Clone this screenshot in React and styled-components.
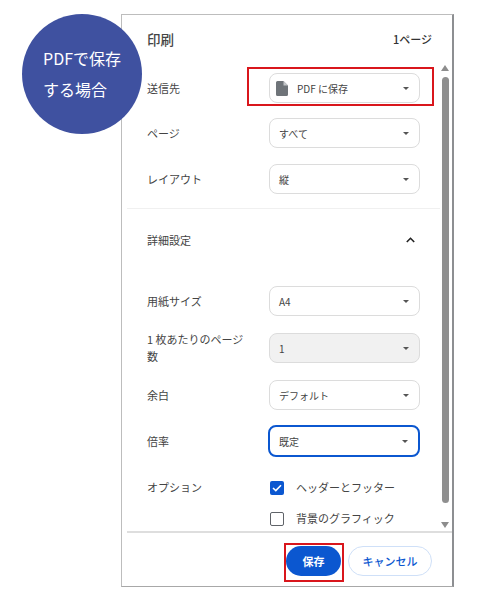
import React from "react";
import styled, { createGlobalStyle } from "styled-components";

const Global = createGlobalStyle`
  html, body { margin: 0; padding: 0; background: #fff; }
  body { font-family: "Noto Sans CJK JP", "Liberation Sans", sans-serif; }
`;
const Page = styled.div`
  position: relative;
  width: 480px;
  height: 600px;
  padding: 14px 26px 0 121px;
  box-sizing: border-box;
  overflow: hidden;
`;
const Badge = styled.div`
  position: absolute;
  left: 22px;
  top: 14px;
  width: 120px;
  height: 120px;
  border-radius: 50%;
  background: #3f51a0;
  color: #fff;
  font-size: 16px;
  line-height: 31px;
  padding: 29px 0 0 21px;
  box-sizing: border-box;
  z-index: 2;
  font-family: "Noto Sans CJK JP", sans-serif;
  font-weight: 400;
`;
const Panel = styled.div`
  width: 333px;
  height: 573px;
  box-sizing: border-box;
  border-top: 1px solid #bdbdbd;
  border-left: 1px solid #bdbdbd;
  border-right: 2px solid #8d8f92;
  border-bottom: 1px solid #a8a8a8;
  display: flex;
  flex-direction: column;
  background: #fff;
`;
const Header = styled.div`
  height: 48px;
  display: flex;
  align-items: center;
  justify-content: space-between;
  padding: 0 20px 0 25px;
  flex: none;
`;
const Title = styled.div`
  font-size: 13.5px;
  color: #444;
  font-weight: 500;
`;
const Pages = styled.div`
  font-size: 11px;
  color: #333;
  font-weight: 500;
`;
const Body = styled.div`
  position: relative;
  flex: 1;
  overflow: hidden;
  padding-top: 10px;
`;
const Row = styled.div`
  display: flex;
  align-items: center;
  min-height: 30px;
  margin-bottom: ${(p) => p.$gap ?? 16}px;
  padding-left: 25px;
`;
const Label = styled.div`
  width: 122px;
  flex: none;
  box-sizing: border-box;
  padding-right: 20px;
  font-size: 11px;
  line-height: 17px;
  color: #444;
`;
const Select = styled.div`
  width: ${(p) => (p.$focus ? 152 : 151)}px;
  height: ${(p) => (p.$focus ? 32 : 30)}px;
  margin-left: ${(p) => (p.$focus ? -1 : 0)}px;
  box-sizing: border-box;
  border: ${(p) => (p.$focus ? "2px solid #0b57d0" : "1.5px solid #dcdcdc")};
  border-radius: 8px;
  background: ${(p) => (p.$disabled ? "#f1f1f1" : "#fff")};
  display: flex;
  align-items: center;
  padding: 0 10px 0 9px;
  font-size: 10px;
  color: #444;
`;
const SelectText = styled.span`
  flex: 1;
`;
const FileIcon = styled.svg`
  width: 12px;
  height: 15px;
  margin: 0 9px 0 -3px;
  flex: none;
`;
const Caret = styled.span`
  width: 0;
  height: 0;
  border-left: 3px solid transparent;
  border-right: 3px solid transparent;
  border-top: 3.5px solid #555;
`;
const Divider = styled.div`
  height: 1px;
  background: #f0f0f0;
  margin: 0 12px 0 5px;
`;
const MoreRow = styled.div`
  height: 62px;
  display: flex;
  align-items: center;
  justify-content: space-between;
  padding: 0 37px 0 25px;
  margin-bottom: 15px;
`;
const Chevron = styled.svg`
  width: 9px;
  height: 6px;
`;
const OptionRow = styled.div`
  display: flex;
  align-items: center;
  padding-left: 25px;
  margin-bottom: ${(p) => p.$gap ?? 0}px;
`;
const Check = styled.span`
  width: 14px;
  height: 14px;
  box-sizing: border-box;
  border-radius: 2px;
  flex: none;
  margin: 0 12px 0 1px;
  background: ${(p) => (p.$on ? "#0b57d0" : "#fff")};
  border: ${(p) => (p.$on ? "none" : "1.5px solid #5f6368")};
  display: flex;
  align-items: center;
  justify-content: center;
`;
const OptionText = styled.span`
  font-size: 11px;
  line-height: 17px;
  color: #444;
`;
const Scrollbar = styled.div`
  position: absolute;
  right: 3px;
  top: 0;
  bottom: 0;
  width: 8px;
  display: flex;
  flex-direction: column;
  align-items: center;
  padding-top: 2px;
`;
const ScrollUp = styled.span`
  width: 0;
  height: 0;
  flex: none;
  border-left: 4px solid transparent;
  border-right: 4px solid transparent;
  border-bottom: 6px solid #8d8d8d;
`;
const ScrollDown = styled.span`
  width: 0;
  height: 0;
  flex: none;
  margin-top: 19px;
  border-left: 4px solid transparent;
  border-right: 4px solid transparent;
  border-top: 6px solid #8d8d8d;
`;
const Thumb = styled.div`
  width: 7px;
  height: 426px;
  flex: none;
  margin-top: 6px;
  border-radius: 4px;
  background: #8f8f8f;
`;
const Footer = styled.div`
  height: 55px;
  flex: none;
  border-top: 2px solid #dedede;
  display: flex;
  align-items: flex-start;
  margin-left: 5px;
  padding: 13px 0 0 159px;
  gap: 7px;
  box-sizing: border-box;
`;
const Primary = styled.div`
  width: 55px;
  height: 30px;
  border-radius: 15px;
  background: #0b57d0;
  color: #fff;
  font-size: 11px;
  font-weight: 700;
  display: flex;
  align-items: center;
  justify-content: center;
`;
const Secondary = styled.div`
  width: 84px;
  height: 30px;
  box-sizing: border-box;
  border-radius: 15px;
  border: 1.5px solid #cfe0f8;
  color: #0b57d0;
  font-size: 11px;
  font-weight: 500;
  display: flex;
  align-items: center;
  justify-content: center;
`;
const Highlight = styled.div`
  position: absolute;
  left: ${(p) => p.$x}px;
  top: ${(p) => p.$y}px;
  width: ${(p) => p.$w}px;
  height: ${(p) => p.$h}px;
  box-sizing: border-box;
  border: 2px solid #d9161c;
  pointer-events: none;
`;

const Sel = ({ children, icon, ...rest }) => (
  <Select {...rest}>
    {icon && (
      <FileIcon viewBox="0 0 12 15">
        <path d="M1.5 0H7.5L12 4.5V13.5A1.5 1.5 0 0 1 10.5 15H1.5A1.5 1.5 0 0 1 0 13.5V1.5A1.5 1.5 0 0 1 1.5 0Z" fill="#6f7479" />
        <path d="M7.5 0V4.5H12Z" fill="#c4c6c9" />
      </FileIcon>
    )}
    <SelectText>{children}</SelectText>
    <Caret />
  </Select>
);

export default function App() {
  return (
    <Page>
      <Global />
      <Badge>
        PDFで保存
        <br />
        する場合
      </Badge>
      <Panel>
        <Header>
          <Title>印刷</Title>
          <Pages>1ページ</Pages>
        </Header>
        <Body>
          <Row $gap={15}><Label>送信先</Label><Sel icon>PDF に保存</Sel></Row>
          <Row $gap={16}><Label>ページ</Label><Sel>すべて</Sel></Row>
          <Row $gap={14}><Label>レイアウト</Label><Sel>縦</Sel></Row>
          <Divider />
          <MoreRow>
            <Label>詳細設定</Label>
            <Chevron viewBox="0 0 9 6">
              <path d="M0.8 5L4.5 1.3L8.2 5" fill="none" stroke="#222" strokeWidth="1.6" />
            </Chevron>
          </MoreRow>
          <Row $gap={15}><Label>用紙サイズ</Label><Sel>A4</Sel></Row>
          <Row $gap={15}><Label>1 枚あたりのページ数</Label><Sel $disabled>1</Sel></Row>
          <Row $gap={15}><Label>余白</Label><Sel>デフォルト</Sel></Row>
          <Row $gap={22}><Label>倍率</Label><Sel $focus>既定</Sel></Row>
          <OptionRow $gap={14}>
            <Label>オプション</Label>
            <Check $on>
              <svg width="10" height="8" viewBox="0 0 10 8">
                <path d="M1 4L3.8 6.6L9 1.2" fill="none" stroke="#fff" strokeWidth="1.6" />
              </svg>
            </Check>
            <OptionText>ヘッダーとフッター</OptionText>
          </OptionRow>
          <OptionRow>
            <Label />
            <Check />
            <OptionText>背景のグラフィック</OptionText>
          </OptionRow>
          <Scrollbar>
            <ScrollUp />
            <Thumb />
            <ScrollDown />
          </Scrollbar>
        </Body>
        <Footer>
          <Primary>保存</Primary>
          <Secondary>キャンセル</Secondary>
        </Footer>
      </Panel>
      <Highlight $x={247} $y={67} $w={187} $h={39} />
      <Highlight $x={284} $y={543} $w={60} $h={39} />
    </Page>
  );
}
